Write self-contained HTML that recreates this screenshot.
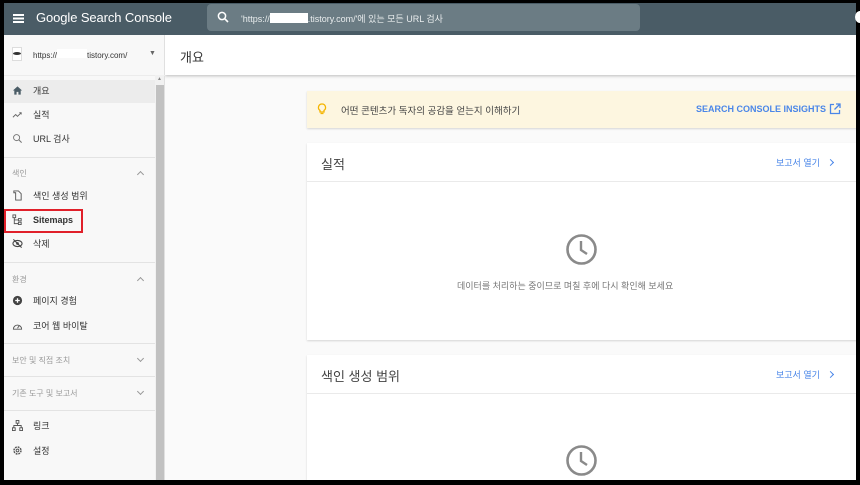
<!DOCTYPE html>
<html><head><meta charset="utf-8">
<style>
*{margin:0;padding:0;box-sizing:border-box}
body{width:860px;height:485px;background:#000;position:relative;overflow:hidden;font-family:"Liberation Sans","Noto Sans CJK KR",sans-serif;}
.abs{position:absolute}
#hdr{left:4px;top:3px;width:852px;height:32px;background:#4a5c66}
#search{left:207px;top:4px;width:433px;height:27px;background:#6b7c84;border-radius:4px}
#side{left:4px;top:35px;width:161px;height:445px;background:#f8f8f8;border-right:1px solid #e0e0e0}
#main{left:165px;top:35px;width:691px;height:445px;background:#fafafa;overflow:hidden}
.nav{position:absolute;left:0;width:152px;height:22px;font-size:9px;color:#333;line-height:22px}
.nav .t{position:absolute;left:29px}
.nav svg{position:absolute;left:8px;top:5px}
.sec{position:absolute;left:8px;font-size:8px;color:#999}
.sep{position:absolute;left:0;width:152px;height:1px;background:#e3e3e3}
.chev{position:absolute;left:134px;width:5px;height:5px;border-left:1px solid #999;border-top:1px solid #999}
.up{transform:rotate(45deg)}
.down{transform:rotate(225deg)}
.card{position:absolute;left:142px;width:560px;background:#fff;box-shadow:0 1px 2px rgba(0,0,0,.15)}
.link{position:absolute;color:#4a86e8;font-size:9px}
.rc{display:inline-block;width:5px;height:5px;border-right:1.6px solid #4a86e8;border-top:1.6px solid #4a86e8;transform:rotate(45deg);margin-left:8px;vertical-align:1px}
</style></head><body>
<div id="hdr" class="abs">
  <div class="abs" style="left:9px;top:11px;width:11px;height:1.5px;background:#fff;box-shadow:0 3.5px 0 #fff,0 7px 0 #fff"></div>
  <div class="abs" style="left:32px;top:7px;color:#fff;font-size:13px;letter-spacing:-0.1px">Google Search Console</div>
  <div class="abs" style="left:851px;top:8px;width:10px;height:12px;border-radius:50%;background:#fff"></div>
</div>
<div id="search" class="abs">
  <svg class="abs" style="left:10px;top:7px" width="12" height="12" viewBox="0 0 12 12"><circle cx="5" cy="5" r="3.6" fill="none" stroke="#fff" stroke-width="1.5"/><line x1="7.6" y1="7.6" x2="11" y2="11" stroke="#fff" stroke-width="1.6"/></svg>
  <div class="abs" style="left:34px;top:8px;font-size:9px;color:#e8eced;white-space:nowrap">'https://<span style="display:inline-block;width:38px;height:10px;background:#fff;vertical-align:-1px"></span>.tistory.com/'에 있는 모든 URL 검사</div>
</div>
<div id="side" class="abs">
  <div class="abs" style="left:8px;top:12px;width:10px;height:14px;background:#fff;border:1px solid #ddd"></div>
  <div class="abs" style="left:9px;top:17px;width:8px;height:3px;background:#333;border-radius:50%"></div>
  <div class="abs" style="left:29px;top:14px;font-size:8px;color:#333;white-space:nowrap">https://<span style="display:inline-block;width:30px;height:9px;background:#fff"></span>tistory.com/</div>
  <div class="abs" style="left:145px;top:15px;font-size:7px;color:#666">▼</div>
  <div class="sep" style="top:40px;width:161px;background:#ececec"></div>
  <div class="abs" style="left:0;top:45px;width:152px;height:23px;background:#ececec"></div>
  <div class="nav" style="top:45px"><svg width="11" height="11" viewBox="0 0 12 12"><path d="M6 1.5 1 6h1.5v4.5h2.5V7.5h2v3h2.5V6H11z" fill="#4a5c66"/></svg><span class="t">개요</span></div>
  <div class="nav" style="top:69px"><svg width="11" height="11" viewBox="0 0 12 12"><path d="M1 9l3-3 2 2 4-4M8 4h2v2" fill="none" stroke="#666" stroke-width="1"/></svg><span class="t">실적</span></div>
  <div class="nav" style="top:93px"><svg width="11" height="11" viewBox="0 0 12 12"><circle cx="5" cy="5" r="3.3" fill="none" stroke="#777" stroke-width="1"/><line x1="7.4" y1="7.4" x2="10.5" y2="10.5" stroke="#777" stroke-width="1.2"/></svg><span class="t">URL 검사</span></div>
  <div class="sep" style="top:122px"></div>
  <div class="sec" style="top:133px">색인</div><div class="chev up" style="top:137px"></div>
  <div class="nav" style="top:150px"><svg width="11" height="11" viewBox="0 0 12 12"><path d="M2 1h5l3 3v7H4V3H2z" fill="none" stroke="#555" stroke-width="1"/></svg><span class="t">색인 생성 범위</span></div>
  <div class="nav" style="top:174px;font-weight:bold"><svg width="11" height="11" viewBox="0 0 12 12"><rect x="1" y="1" width="3" height="3" fill="none" stroke="#555"/><rect x="7" y="5" width="3" height="2.5" fill="none" stroke="#555"/><rect x="7" y="9" width="3" height="2.5" fill="none" stroke="#555"/><path d="M2.5 4v6.5H7M2.5 6.5H7" fill="none" stroke="#555"/></svg><span class="t">Sitemaps</span></div>
  <div class="abs" style="left:0;top:174px;width:79px;height:24px;border:2px solid #e0202a"></div>
  <div class="nav" style="top:198px"><svg width="11" height="11" viewBox="0 0 12 12"><ellipse cx="6" cy="6" rx="5" ry="3.3" fill="none" stroke="#444" stroke-width="1.2"/><circle cx="6" cy="6" r="1.5" fill="#444"/><line x1="1.5" y1="1.5" x2="10.5" y2="10.5" stroke="#444" stroke-width="1.2"/></svg><span class="t">삭제</span></div>
  <div class="sep" style="top:227px"></div>
  <div class="sec" style="top:239px">환경</div><div class="chev up" style="top:243px"></div>
  <div class="nav" style="top:255px"><svg width="11" height="11" viewBox="0 0 12 12"><circle cx="6" cy="6" r="5" fill="#444"/><path d="M6 3.5v5M3.5 6h5" stroke="#fff" stroke-width="1.4"/></svg><span class="t">페이지 경험</span></div>
  <div class="nav" style="top:280px"><svg width="11" height="11" viewBox="0 0 12 12"><path d="M1.5 10a4.5 4.5 0 1 1 9 0z" fill="none" stroke="#555"/><line x1="6" y1="9" x2="8" y2="6" stroke="#555"/></svg><span class="t">코어 웹 바이탈</span></div>
  <div class="sep" style="top:308px"></div>
  <div class="sec" style="top:320px">보안 및 직접 조치</div><div class="chev down" style="top:321px"></div>
  <div class="sep" style="top:341px"></div>
  <div class="sec" style="top:353px">기존 도구 및 보고서</div><div class="chev down" style="top:354px"></div>
  <div class="sep" style="top:375px"></div>
  <div class="nav" style="top:380px"><svg width="11" height="11" viewBox="0 0 12 12"><rect x="4.5" y="0.5" width="3" height="3" fill="none" stroke="#555"/><rect x="0.5" y="8.5" width="3" height="3" fill="none" stroke="#555"/><rect x="8.5" y="8.5" width="3" height="3" fill="none" stroke="#555"/><path d="M6 3.5V6M2 8.5V6h8v2.5" fill="none" stroke="#555"/></svg><span class="t">링크</span></div>
  <div class="nav" style="top:405px"><svg width="11" height="11" viewBox="0 0 12 12"><circle cx="6" cy="6" r="3.8" fill="none" stroke="#555" stroke-width="1.6" stroke-dasharray="2 1"/><circle cx="6" cy="6" r="1.5" fill="none" stroke="#555"/></svg><span class="t">설정</span></div>
  <div class="abs" style="left:151px;top:40px;width:9px;height:405px;background:#f1f1f1"></div>
  <div class="abs" style="left:153px;top:41px;font-size:5px;color:#888">▲</div>
  <div class="abs" style="left:152px;top:50px;width:8px;height:395px;background:#c1c1c1"></div>
</div>
<div id="main" class="abs">
  <div class="abs" style="left:0;top:0;width:691px;height:40px;background:#fff;box-shadow:0 1px 3px rgba(0,0,0,.25)"></div>
  <div class="abs" style="left:15px;top:12px;font-size:13px;color:#333">개요</div>
  <div class="card" style="top:56px;height:37px;background:#fdf6e0">
    <svg class="abs" style="left:10px;top:12px" width="10" height="13" viewBox="0 0 10 13"><path d="M5 1a3.5 3.5 0 0 0-2 6.4V9h4V7.4A3.5 3.5 0 0 0 5 1zM3.5 10.5h3" fill="none" stroke="#f4b400" stroke-width="1.3"/></svg>
    <div class="abs" style="left:34px;top:12px;font-size:9.5px;color:#444">어떤 콘텐츠가 독자의 공감을 얻는지 이해하기</div>
    <div class="link" style="left:389px;top:13px;font-weight:bold;font-size:9px">SEARCH CONSOLE INSIGHTS</div>
    <svg class="abs" style="left:522px;top:12px" width="12" height="12" viewBox="0 0 12 12"><path d="M5 1.5H1.5v9h9V7M7 1h4v4M11 1 5.5 6.5" fill="none" stroke="#4a86e8" stroke-width="1.3"/></svg>
  </div>
  <div class="card" style="top:108px;height:197px">
    <div class="abs" style="left:14px;top:11px;font-size:13px;color:#444">실적</div>
    <div class="link" style="left:469px;top:13px">보고서 열기<span class="rc"></span></div>
    <div class="abs" style="left:0;top:38px;width:560px;height:1px;background:#eaeaea"></div>
    <svg class="abs" style="left:258px;top:90px" width="33" height="33" viewBox="0 0 33 33"><circle cx="16.5" cy="16.5" r="14" fill="none" stroke="#8a8a8a" stroke-width="2.6"/><path d="M16 8v9l6 4" fill="none" stroke="#8a8a8a" stroke-width="2.4"/></svg>
    <div class="abs" style="left:150px;top:136px;font-size:9px;color:#777">데이터를 처리하는 중이므로 며칠 후에 다시 확인해 보세요</div>
  </div>
  <div class="card" style="top:320px;height:140px">
    <div class="abs" style="left:14px;top:11px;font-size:13px;color:#444">색인 생성 범위</div>
    <div class="link" style="left:469px;top:13px">보고서 열기<span class="rc"></span></div>
    <div class="abs" style="left:0;top:38px;width:560px;height:1px;background:#eaeaea"></div>
    <svg class="abs" style="left:258px;top:89px" width="33" height="33" viewBox="0 0 33 33"><circle cx="16.5" cy="16.5" r="14" fill="none" stroke="#8a8a8a" stroke-width="2.6"/><path d="M16 8v9l6 4" fill="none" stroke="#8a8a8a" stroke-width="2.4"/></svg>
  </div>
</div>
</body></html>
